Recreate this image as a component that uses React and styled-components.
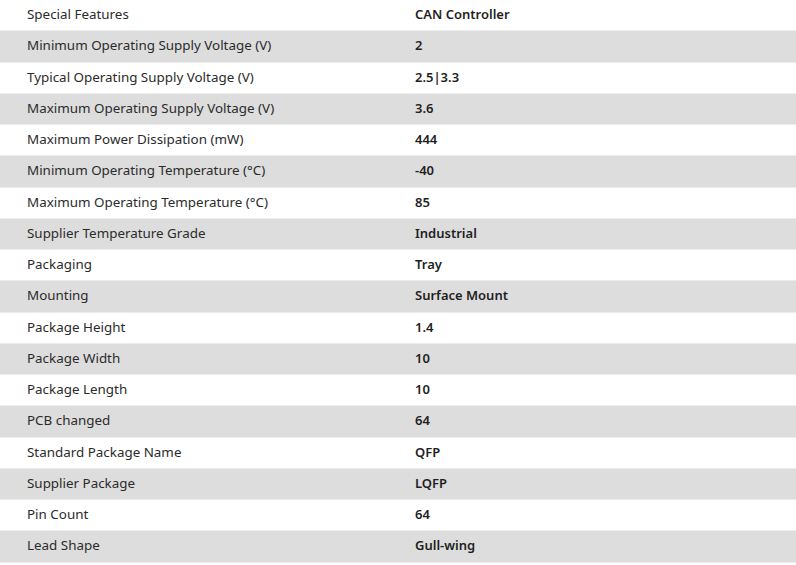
import styled, { createGlobalStyle } from "styled-components";

const GlobalStyle = createGlobalStyle`
  body {
    margin: 0;
    background: #ffffff;
    font-family: "Noto Sans", "Open Sans", sans-serif;
  }
`;

const specs = [
  ["Special Features", "CAN Controller"],
  ["Minimum Operating Supply Voltage (V)", "2"],
  ["Typical Operating Supply Voltage (V)", "2.5|3.3"],
  ["Maximum Operating Supply Voltage (V)", "3.6"],
  ["Maximum Power Dissipation (mW)", "444"],
  ["Minimum Operating Temperature (°C)", "-40"],
  ["Maximum Operating Temperature (°C)", "85"],
  ["Supplier Temperature Grade", "Industrial"],
  ["Packaging", "Tray"],
  ["Mounting", "Surface Mount"],
  ["Package Height", "1.4"],
  ["Package Width", "10"],
  ["Package Length", "10"],
  ["PCB changed", "64"],
  ["Standard Package Name", "QFP"],
  ["Supplier Package", "LQFP"],
  ["Pin Count", "64"],
  ["Lead Shape", "Gull-wing"],
];

const SpecTable = () => {
  return (
    <Table>
      <GlobalStyle />
      {specs.map(([label, value], i) => (
        <Row key={label} $shaded={i % 2 === 1}>
          <Label>{label}</Label>
          <Value>{value}</Value>
        </Row>
      ))}
    </Table>
  );
};

const Table = styled.div`
  width: 796px;
  display: flex;
  flex-direction: column;
`;

const Row = styled.div`
  display: grid;
  grid-template-columns: 388px 1fr;
  align-items: center;
  height: 31.25px;
  box-sizing: border-box;
  padding-bottom: 2px;
  border-bottom: 1px solid #ededed;
  background: ${(p) => (p.$shaded ? "#dddddd" : "#ffffff")};
`;

const Label = styled.div`
  padding-left: 27px;
  font-size: 13.4px;
  color: #2b2b2b;
`;

const Value = styled.div`
  padding-left: 27px;
  font-size: 13px;
  font-weight: 600;
  color: #1f1f1f;
`;

export default SpecTable;
